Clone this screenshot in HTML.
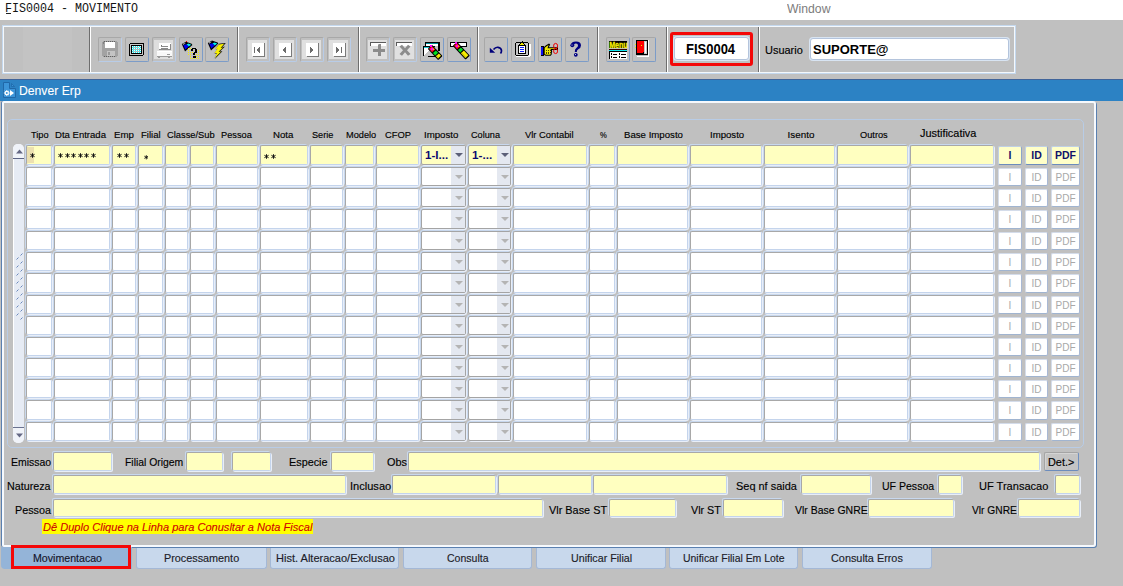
<!DOCTYPE html><html><head><meta charset="utf-8"><style>
*{margin:0;padding:0;box-sizing:border-box}
html,body{width:1123px;height:586px;overflow:hidden;background:#c0c0c0;font-family:"Liberation Sans",sans-serif}
.a{position:absolute}
.t{position:absolute;white-space:nowrap;font-family:"Liberation Sans",sans-serif;color:#000;line-height:1}
.cell{position:absolute;border-style:solid;border-width:1px;border-color:#a8a8a8 #c4d4ec #c4d4ec #a8a8a8;box-shadow:-1px -1px 0 0 #c8d8ee,1px 1px 0 0 #e8eef8;border-radius:2px;background:#fff}
.y{background:#ffffc0}
.fld{position:absolute;border-style:solid;border-width:1px;border-color:#a8a8a8 #c4d4ec #c4d4ec #a8a8a8;box-shadow:-1px -1px 0 0 #c8d8ee,1px 1px 0 0 #e8eef8;border-radius:2px;background:#ffffc0}
.btn{position:absolute;width:24px;height:25px;border:1px solid #a8a8a8;border-radius:2px}
.btn svg{left:-1px!important;top:-1px!important}
.sep{position:absolute;top:27px;height:45px;width:2px;border-left:1px solid #6e6e6e;border-right:1px solid #fff}
.tab{position:absolute;top:548px;height:21px;background:#c8d8ec;border-radius:0 0 3px 3px;border:1px solid #a4b8d6;border-top:none;font-size:10.9px;color:#1c1c2c;text-align:center;line-height:22px}
</style></head><body>
<div class="a" style="left:0;top:0;width:1123px;height:20px;background:#fff"></div>
<div class="t" style="left:4.62px;top:4px;font-family:'Liberation Mono';font-size:11.89px;font-weight:normal;font-style:normal;color:#141414;transform:scaleX(0.9828);transform-origin:0 0;">FIS0004 - MOVIMENTO</div>
<div class="a" style="left:6px;top:13px;width:5px;height:1px;background:#202020"></div>
<div class="t" style="left:787.20px;top:3px;font-family:'Liberation Sans';font-size:12.9px;font-weight:normal;font-style:normal;color:#7c7c7c;transform:scaleX(0.9478);transform-origin:0 0;">Window</div>
<div class="a" style="left:2px;top:25px;width:1014px;height:49px;border:1px solid #c4d8ee;box-shadow:inset 0 0 0 1px #f4f8fc"></div>
<div class="sep" style="left:89px"></div>
<div class="sep" style="left:237px"></div>
<div class="sep" style="left:358px"></div>
<div class="sep" style="left:477px"></div>
<div class="sep" style="left:597px"></div>
<div class="sep" style="left:666px"></div>
<div class="sep" style="left:758px"></div>
<div class="btn" style="left:98px;top:37px;border-right-color:#b8cce8;border-bottom-color:#b8cce8"><svg width="24" height="25" viewBox="0 0 24 25" style="position:absolute;left:0;top:0" shape-rendering="crispEdges">
<rect x="4" y="4" width="16" height="16" fill="#a2a2a2"/>
<rect x="4" y="4" width="1" height="1" fill="#c0c0c0"/><rect x="19" y="4" width="1" height="1" fill="#c0c0c0"/>
<rect x="4" y="19" width="1" height="1" fill="#c0c0c0"/><rect x="19" y="19" width="1" height="1" fill="#c0c0c0"/>
<rect x="7" y="5" width="10" height="6" fill="#ffffff"/>
<path d="M6 4.5h12" stroke="#606060" stroke-dasharray="1 1" stroke-width="1"/>
<rect x="9" y="14" width="8" height="5" fill="#c4c4c4"/>
<rect x="10" y="15" width="2" height="3" fill="#9a9a9a"/>
<path d="M6 19.5h12" stroke="#606060" stroke-dasharray="1 1" stroke-width="1"/>
<rect x="5" y="5" width="1" height="2" fill="#808080"/>
</svg></div>
<div class="btn" style="left:125px;top:37px;border-right-color:#7c9cc8;border-bottom-color:#7c9cc8"><svg width="24" height="25" viewBox="0 0 24 25" style="position:absolute;left:0;top:0" shape-rendering="crispEdges">
<rect x="4" y="6" width="15" height="13" rx="2" fill="#000"/>
<rect x="5" y="7" width="13" height="11" fill="#c8c8c8"/>
<rect x="6" y="8" width="11" height="9" fill="#000"/>
<rect x="7" y="9" width="9" height="7" fill="#18e8f0"/>
<path d="M7 9h1v1h-1zM9 9h1v1h-1zM11 9h1v1h-1zM13 9h1v1h-1zM15 9h1v1h-1zM8 10h1v1h-1zM10 10h1v1h-1zM12 10h1v1h-1zM14 10h1v1h-1zM7 11h1v1h-1zM9 11h1v1h-1zM11 11h1v1h-1zM13 11h1v1h-1zM15 11h1v1h-1zM8 12h1v1h-1zM10 12h1v1h-1zM12 12h1v1h-1zM14 12h1v1h-1zM7 13h1v1h-1zM9 13h1v1h-1zM11 13h1v1h-1zM13 13h1v1h-1zM15 13h1v1h-1zM8 14h1v1h-1zM10 14h1v1h-1zM12 14h1v1h-1zM14 14h1v1h-1zM7 15h1v1h-1zM9 15h1v1h-1zM11 15h1v1h-1zM13 15h1v1h-1zM15 15h1v1h-1z" fill="#e8ffff"/>
<rect x="8" y="10" width="6" height="1" fill="#b0c0c0"/><rect x="8" y="12" width="7" height="1" fill="#b0c0c0"/><rect x="8" y="14" width="7" height="1" fill="#b0c0c0"/>
</svg></div>
<div class="btn" style="left:152px;top:37px;border-right-color:#b8cce8;border-bottom-color:#b8cce8"><svg width="24" height="25" viewBox="0 0 24 25" style="position:absolute;left:0;top:0" shape-rendering="crispEdges">
<rect x="2" y="3" width="19" height="19" fill="#dedede"/>
<rect x="7" y="6" width="12" height="7" fill="#ffffff"/>
<rect x="18" y="7" width="1" height="6" fill="#8a8a8a"/><rect x="7" y="12" width="12" height="1" fill="#8a8a8a"/>
<rect x="9" y="8" width="1" height="1" fill="#777"/><rect x="9" y="9" width="7" height="1" fill="#8a8a8a"/><rect x="9" y="11" width="7" height="1" fill="#8a8a8a"/>
<rect x="5" y="14" width="15" height="5" fill="#f8f8f8"/>
<rect x="5" y="14" width="15" height="1" fill="#ffffff"/>
<rect x="15" y="17" width="3" height="1" fill="#9a9a9a"/>
<rect x="5" y="19" width="15" height="1" fill="#9a9a9a"/>
<rect x="6" y="20" width="2" height="1" fill="#9a9a9a"/><rect x="16" y="20" width="2" height="1" fill="#9a9a9a"/>
</svg></div>
<div class="btn" style="left:179px;top:37px;border-right-color:#7c9cc8;border-bottom-color:#7c9cc8"><svg width="24" height="25" viewBox="0 0 24 25" style="position:absolute;left:0;top:0" shape-rendering="crispEdges"><g transform="translate(0,0.5)" shape-rendering="auto">
<path d="M2.8 6.6 L6 14 L13.4 7.4 L12.6 6.2 L7 4.2 Z" fill="#000"/>
<path d="M4.4 7.6 L6.3 12 L9.8 9 L7.6 6.8 Z" fill="#0000f0"/>
<path d="M7.6 6.8 L9.8 9 L12.2 7.2 L9.5 6 Z" fill="#00f0f0"/>
<path d="M3.6 6.2 L7 5.2 L4.2 7.4 Z" fill="#c0c0c0"/>
</g>
<rect x="6.8" y="4" width="1.4" height="1.2" fill="#f00000"/>
<path d="M9 11h1v1h-1zM11 11h1v1h-1zM9 13h1v1h-1zM19 13h1v1h-1zM9 15h1v1h-1zM11 15h1v1h-1zM13 15h1v1h-1zM17 15h1v1h-1zM19 15h1v1h-1zM9 17h1v1h-1zM11 17h1v1h-1zM17 17h1v1h-1zM19 17h1v1h-1zM11 19h1v1h-1zM17 19h1v1h-1zM19 19h1v1h-1zM11 21h1v1h-1zM13 21h1v1h-1zM15 21h1v1h-1zM17 21h1v1h-1zM19 21h1v1h-1z" fill="#f8f000"/>
<rect x="13" y="11" width="4" height="1.2" fill="#000"/>
<rect x="12" y="12" width="2" height="2" fill="#000"/>
<rect x="16" y="12" width="2" height="3.5" fill="#000"/>
<rect x="15" y="15" width="2" height="1" fill="#000"/>
<rect x="14" y="15.5" width="2" height="2.5" fill="#000"/>
<rect x="14" y="19" width="3" height="2" fill="#000"/>
</svg></div>
<div class="btn" style="left:205px;top:37px;border-right-color:#7c9cc8;border-bottom-color:#7c9cc8"><svg width="24" height="25" viewBox="0 0 24 25" style="position:absolute;left:0;top:0" shape-rendering="crispEdges"><g transform="translate(0,-0.6)" shape-rendering="auto">
<path d="M2.8 6.6 L6 14 L13.4 7.4 L12.6 6.2 L7 4.2 Z" fill="#000"/>
<path d="M4.4 7.6 L6.3 12 L9.8 9 L7.6 6.8 Z" fill="#0000f0"/>
<path d="M7.6 6.8 L9.8 9 L12.2 7.2 L9.5 6 Z" fill="#00f0f0"/>
<path d="M3.6 6.2 L7 5.2 L4.2 7.4 Z" fill="#c0c0c0"/>
</g>
<g shape-rendering="auto">
<path d="M12.6 7 L19 6.3 L15.5 10.4 L18.6 9.7 L13.4 14.5 L16 14.2 L8.6 21.9 L11.4 16.4 L8.6 16.8 L11.9 12 L9.4 12.4 Z" fill="#9a9aa8"/>
<path d="M14.2 6.8 L20.8 6 L17 10.3 L20 9.6 L14.8 14.4 L17.4 14.2 L9.8 22 L12.8 16.3 L10 16.7 L13.4 11.9 L10.8 12.3 Z" fill="#000"/>
<path d="M13.8 7.4 L19.2 6.8 L15.6 10.9 L18.4 10.3 L13.6 14.8 L16 14.7 L9.8 21 L12 16 L9.4 16.3 L12.6 11.8 L10.2 12.2 Z" fill="#f8f000"/>
</g>
</svg></div>
<div class="btn" style="left:246px;top:37px;border-right-color:#b8cce8;border-bottom-color:#b8cce8"><svg width="24" height="25" viewBox="0 0 24 25" style="position:absolute;left:0;top:0" shape-rendering="crispEdges">
<rect x="2" y="3" width="19" height="19" fill="#e0e0e0"/>
<rect x="6" y="6" width="12" height="13" fill="#ffffff"/>
<rect x="18" y="6" width="1" height="14" fill="#7a7a7a"/><rect x="7" y="19" width="12" height="1" fill="#7a7a7a"/>
<rect x="8" y="10" width="1" height="6" fill="#6c6c6c"/><path d="M10 13 L14 10 L14 16 Z" fill="#6c6c6c"/></svg></div>
<div class="btn" style="left:273px;top:37px;border-right-color:#b8cce8;border-bottom-color:#b8cce8"><svg width="24" height="25" viewBox="0 0 24 25" style="position:absolute;left:0;top:0" shape-rendering="crispEdges">
<rect x="2" y="3" width="19" height="19" fill="#e0e0e0"/>
<rect x="6" y="6" width="12" height="13" fill="#ffffff"/>
<rect x="18" y="6" width="1" height="14" fill="#7a7a7a"/><rect x="7" y="19" width="12" height="1" fill="#7a7a7a"/>
<path d="M9 13 L13 10 L13 16 Z" fill="#6c6c6c"/></svg></div>
<div class="btn" style="left:300px;top:37px;border-right-color:#b8cce8;border-bottom-color:#b8cce8"><svg width="24" height="25" viewBox="0 0 24 25" style="position:absolute;left:0;top:0" shape-rendering="crispEdges">
<rect x="2" y="3" width="19" height="19" fill="#e0e0e0"/>
<rect x="6" y="6" width="12" height="13" fill="#ffffff"/>
<rect x="18" y="6" width="1" height="14" fill="#7a7a7a"/><rect x="7" y="19" width="12" height="1" fill="#7a7a7a"/>
<path d="M14 13 L10 10 L10 16 Z" fill="#6c6c6c"/></svg></div>
<div class="btn" style="left:327px;top:37px;border-right-color:#b8cce8;border-bottom-color:#b8cce8"><svg width="24" height="25" viewBox="0 0 24 25" style="position:absolute;left:0;top:0" shape-rendering="crispEdges">
<rect x="2" y="3" width="19" height="19" fill="#e0e0e0"/>
<rect x="6" y="6" width="12" height="13" fill="#ffffff"/>
<rect x="18" y="6" width="1" height="14" fill="#7a7a7a"/><rect x="7" y="19" width="12" height="1" fill="#7a7a7a"/>
<path d="M13 13 L9 10 L9 16 Z" fill="#6c6c6c"/><rect x="14" y="10" width="1" height="6" fill="#6c6c6c"/></svg></div>
<div class="btn" style="left:366px;top:37px;border-right-color:#b8cce8;border-bottom-color:#b8cce8"><svg width="24" height="25" viewBox="0 0 24 25" style="position:absolute;left:0;top:0" shape-rendering="crispEdges">
<rect x="2" y="3" width="19" height="19" fill="#e0e0e0"/>
<rect x="4" y="5" width="16" height="1" fill="#5a5a5a"/>
<rect x="4" y="5" width="1" height="4" fill="#5a5a5a"/>
<rect x="5" y="6" width="15" height="3" fill="#ffffff"/>
<rect x="11.5" y="7" width="3" height="12" fill="#8c8c8c"/>
<rect x="7" y="11.5" width="12" height="3.2" fill="#8c8c8c"/>
<rect x="11.5" y="7" width="1" height="1" fill="#b8b8b8"/>
</svg></div>
<div class="btn" style="left:393px;top:37px;border-right-color:#b8cce8;border-bottom-color:#b8cce8"><svg width="24" height="25" viewBox="0 0 24 25" style="position:absolute;left:0;top:0" shape-rendering="crispEdges">
<rect x="2" y="3" width="19" height="19" fill="#e0e0e0"/>
<rect x="3" y="5" width="16" height="1" fill="#5a5a5a"/>
<rect x="3" y="5" width="1" height="4" fill="#5a5a5a"/>
<rect x="4" y="6" width="15" height="3" fill="#ffffff"/>
<path d="M6.5 9.5 L9 7.8 L12 11.3 L15 7.8 L17.5 9.5 L14 13.2 L17.5 17 L15 18.8 L12 15.2 L9 18.8 L6.5 17 L10 13.2 Z" fill="#8c8c8c" shape-rendering="auto"/>
</svg></div>
<div class="btn" style="left:420px;top:37px;border-right-color:#7c9cc8;border-bottom-color:#7c9cc8"><svg width="24" height="25" viewBox="0 0 24 25" style="position:absolute;left:0;top:0" shape-rendering="crispEdges">
<rect x="5" y="5" width="15" height="1" fill="#000"/><rect x="5" y="5" width="1" height="6" fill="#000"/><rect x="18" y="5" width="2" height="9" fill="#000"/>
<rect x="6" y="6" width="12" height="1" fill="#008c96"/>
<rect x="6" y="7" width="12" height="2" fill="#ffffff"/>
<rect x="3" y="9" width="12" height="1" fill="#000"/><rect x="3" y="9" width="1" height="10" fill="#000"/>
<rect x="4" y="10" width="10" height="1" fill="#18c8d0"/>
<rect x="4" y="11" width="12" height="8" fill="#ffffff"/>
<path d="M4 19 L9 13 L14 19 Z" fill="#c4c4c4"/>
<rect x="8" y="19" width="8" height="1.2" fill="#000"/>
<g transform="translate(10.5,10.5) rotate(47)" shape-rendering="auto">
<rect x="-1" y="-3" width="15.5" height="6" rx="1" fill="#000"/>
<rect x="0" y="-2" width="4.5" height="4" fill="#ff1010"/>
<rect x="1" y="-1.2" width="2.2" height="2.4" fill="#ff00ff"/>
<rect x="2.8" y="-1.8" width="1.2" height="1.2" fill="#f8f000"/>
<rect x="5.8" y="-2" width="3.2" height="4" fill="#00e020"/>
<rect x="10.2" y="-2" width="3.0" height="4" fill="#f8f000"/>
<rect x="10.2" y="0.8" width="3.0" height="1.2" fill="#c8c000"/>
</g>
<rect x="10.0" y="8.3" width="2" height="1.2" fill="#ff00ff"/></svg></div>
<div class="btn" style="left:447px;top:37px;border-right-color:#7c9cc8;border-bottom-color:#7c9cc8"><svg width="24" height="25" viewBox="0 0 24 25" style="position:absolute;left:0;top:0" shape-rendering="crispEdges">
<rect x="3" y="5" width="17" height="5" fill="#000"/>
<rect x="4" y="6" width="15" height="3" fill="#ffffff"/>
<g transform="translate(8.5,7.5) rotate(47)" shape-rendering="auto">
<rect x="-1" y="-3" width="19" height="6" rx="1" fill="#000"/>
<rect x="0" y="-2" width="4.5" height="4" fill="#ff1010"/>
<rect x="1" y="-1.2" width="2.2" height="2.4" fill="#ff00ff"/>
<rect x="2.8" y="-1.8" width="1.2" height="1.2" fill="#f8f000"/>
<rect x="5.8" y="-2" width="3.2" height="4" fill="#00e020"/>
<rect x="10.2" y="-2" width="6.5" height="4" fill="#f8f000"/>
<rect x="10.2" y="0.8" width="6.5" height="1.2" fill="#c8c000"/>
</g>
<rect x="8.0" y="5.3" width="2" height="1.2" fill="#ff00ff"/></svg></div>
<div class="btn" style="left:484px;top:37px;border-right-color:#7c9cc8;border-bottom-color:#7c9cc8"><svg width="24" height="25" viewBox="0 0 24 25" style="position:absolute;left:0;top:0" shape-rendering="crispEdges">
<path d="M9.5 12.5 Q11.5 10 14 10.3 Q17.5 10.8 17.5 13.8 Q17.5 15.3 16.5 16.5" stroke="#00007a" stroke-width="1.7" fill="none" shape-rendering="auto"/>
<path d="M5.8 10.8 L11.2 15.8 L5.8 15.8 Z" fill="#00007a" shape-rendering="auto"/>
</svg></div>
<div class="btn" style="left:511px;top:37px;border-right-color:#7c9cc8;border-bottom-color:#7c9cc8"><svg width="24" height="25" viewBox="0 0 24 25" style="position:absolute;left:0;top:0" shape-rendering="crispEdges">
<rect x="4" y="5" width="14" height="14" rx="2.5" fill="#000"/>
<rect x="5" y="18.5" width="14" height="1.5" fill="#ffffff"/><rect x="18" y="7" width="1.5" height="12" fill="#ffffff"/>
<rect x="5.2" y="6.2" width="11.6" height="11.6" rx="1" fill="#c8c8c8"/>
<rect x="7" y="8" width="8" height="9" fill="#000"/>
<rect x="8" y="9" width="6" height="7" fill="#ffffff"/>
<rect x="9" y="10.3" width="4" height="1" fill="#1020ff"/><rect x="9" y="12.3" width="4" height="1" fill="#1020ff"/><rect x="9" y="14.3" width="4" height="1" fill="#1020ff"/>
<path d="M8 8 L9.5 5.5 L12.5 5.5 L14 8 Z" fill="#000"/>
<path d="M8.8 7.8 L10 6.2 L12 6.2 L13.2 7.8 Z" fill="#f0e800"/>
<rect x="10.5" y="4.3" width="1" height="1.5" fill="#000"/>
</svg></div>
<div class="btn" style="left:538px;top:37px;border-right-color:#7c9cc8;border-bottom-color:#7c9cc8"><svg width="24" height="25" viewBox="0 0 24 25" style="position:absolute;left:0;top:0" shape-rendering="crispEdges">
<rect x="2.5" y="9" width="3.5" height="9.5" fill="#000"/>
<rect x="3.3" y="9.8" width="2" height="7.9" fill="#1010f0"/>
<path d="M5.8 10.2 L8 8.3 L11 6.5 L12.2 7.5 L10.8 10.3 L20 10.3 L20 12.9 L13.8 12.9 L14.2 14.3 L13.8 15.8 L13.8 17.3 L12.8 18.8 L7.5 18.8 L5.8 17.5 Z" fill="#000" shape-rendering="auto"/>
<path d="M6.7 10.8 L8.6 9.2 L10.6 8 L9.5 11.3 L19 11.3 L19 11.9 L12.6 11.9 L13 14.2 L12.7 15.6 L12.7 17 L12.2 17.8 L7.9 17.8 L6.7 16.9 Z" fill="#f0e800" shape-rendering="auto"/>
<path d="M8 13.6h4.5M8 15.2h4.5M8 16.8h4" stroke="#000" stroke-width="0.7" stroke-dasharray="1 0.8"/>
<ellipse cx="17.6" cy="8.9" rx="2" ry="2.5" stroke="#f00000" stroke-width="1" fill="none" shape-rendering="auto"/>
<ellipse cx="17.6" cy="14.1" rx="2" ry="2.5" stroke="#f00000" stroke-width="1" fill="none" shape-rendering="auto"/>
</svg></div>
<div class="btn" style="left:565px;top:37px;border-right-color:#7c9cc8;border-bottom-color:#7c9cc8"><svg width="24" height="25" viewBox="0 0 24 25" style="position:absolute;left:0;top:0" shape-rendering="crispEdges">
<path d="M5.5 8.8 Q6 4.5 11 4.5 Q16 4.5 16 8.5 Q16 11 13.3 12.2 Q11.8 13 11.8 15 L9.8 15 Q9.5 12 11.6 10.8 Q13 10 13 8.6 Q13 6.4 11 6.4 Q9.6 6.4 9.2 7.4 Z" fill="#000080" shape-rendering="auto"/>
<circle cx="7.3" cy="8.3" r="1.9" fill="#000080" shape-rendering="auto"/>
<circle cx="7" cy="8" r="0.5" fill="#fff" shape-rendering="auto"/>
<circle cx="10.8" cy="17.8" r="1.9" fill="#000080" shape-rendering="auto"/>
<circle cx="10.5" cy="17.5" r="0.5" fill="#fff" shape-rendering="auto"/>
</svg></div>
<div class="btn" style="left:606px;top:37px;border-right-color:#7c9cc8;border-bottom-color:#7c9cc8"><svg width="24" height="25" viewBox="0 0 24 25" style="position:absolute;left:0;top:0" shape-rendering="crispEdges">
<rect x="3" y="4" width="18" height="7" fill="#000"/>
<text x="3.2" y="11" font-family="Liberation Sans" font-weight="bold" font-size="9" fill="#f8f000" textLength="18.5" lengthAdjust="spacingAndGlyphs" stroke="#f8f000" stroke-width="0.3">Menu</text>
<rect x="3" y="12" width="18" height="1" fill="#300000"/>
<rect x="3" y="13" width="18" height="1" fill="#10e8f0"/>
<rect x="3" y="14" width="18" height="1" fill="#000"/>
<rect x="3" y="14" width="1" height="8" fill="#000"/>
<rect x="4" y="15" width="17" height="7" fill="#ffffff"/>
<rect x="5" y="16" width="1" height="2" fill="#000"/><rect x="7" y="17" width="4" height="1" fill="#000"/><rect x="13" y="16" width="1" height="2" fill="#000"/><rect x="15" y="17" width="5" height="1" fill="#000"/>
<rect x="5" y="19" width="1" height="2" fill="#000"/><rect x="7" y="20" width="4" height="1" fill="#000"/><rect x="13" y="19" width="1" height="2" fill="#000"/><rect x="15" y="20" width="5" height="1" fill="#000"/>
</svg></div>
<div class="btn" style="left:632px;top:37px;border-right-color:#7c9cc8;border-bottom-color:#7c9cc8"><svg width="24" height="25" viewBox="0 0 24 25" style="position:absolute;left:0;top:0" shape-rendering="crispEdges">
<rect x="4" y="3" width="12" height="15" fill="#000"/>
<rect x="16" y="3" width="1" height="16" fill="#ffffff"/>
<rect x="5" y="4" width="6" height="12" fill="#ff0000"/>
<rect x="11" y="4" width="1" height="11" fill="#ff0000"/>
<rect x="12" y="4" width="3" height="13" fill="#c8c8c8"/>
<rect x="13" y="5" width="1" height="11" fill="#ffffff"/>
<rect x="9" y="8" width="1" height="1" fill="#f0e800"/>
<rect x="3" y="7" width="1" height="1" fill="#f0e800"/><rect x="3" y="10" width="1" height="1" fill="#f0e800"/>
<rect x="5" y="19" width="12" height="1" fill="#ffffff"/>
</svg></div>
<div class="a" style="left:670px;top:32px;width:83px;height:34px;border:3px solid #f40808;border-radius:3px"></div>
<div class="a" style="left:674px;top:37px;width:75px;height:23px;background:#fff;border:1px solid #b4c4dc;border-radius:3px;box-shadow:0 0 0 1px #d8e4f2"></div>
<div class="t" style="left:685.60px;top:42px;font-family:'Liberation Sans';font-size:14.49px;font-weight:bold;font-style:normal;color:#000;transform:scaleX(0.8963);transform-origin:0 0;">FIS0004</div>
<div class="t" style="left:765.39px;top:45px;font-family:'Liberation Sans';font-size:10.87px;font-weight:normal;font-style:normal;color:#000;transform:scaleX(1.0083);transform-origin:0 0;-webkit-text-stroke:0.15px currentColor;">Usuario</div>
<div class="a" style="left:810px;top:38px;width:199px;height:22px;background:#fff;border:1px solid #b4c4dc;border-radius:3px;box-shadow:0 0 0 1px #d8e4f2"></div>
<div class="t" style="left:812.55px;top:43px;font-family:'Liberation Sans';font-size:13.62px;font-weight:bold;font-style:normal;color:#000;transform:scaleX(0.9545);transform-origin:0 0;">SUPORTE@</div>
<div class="a" style="left:0;top:79px;width:1123px;height:22px;background:#2c82c4;border-top:1px solid #40649a"></div>
<div class="a" style="left:23px;top:27px;width:49px;height:44px;background:#c3c3c3"></div>
<div class="t" style="left:18.78px;top:84px;font-family:'Liberation Sans';font-size:13.19px;font-weight:normal;font-style:normal;color:#fff;transform:scaleX(0.9246);transform-origin:0 0;-webkit-text-stroke:0.1px currentColor;">Denver Erp</div>
<svg class="a" style="left:3px;top:82px" width="13" height="16" viewBox="0 0 13 16"><path d="M0.5 0.5h6v6h6v9h-12z" fill="#3c94d8" stroke="#2068a8" stroke-width="1"/><path d="M8.5 1.5l3 3h-3z" fill="#3c94d8" stroke="#2068a8" stroke-width="0.8"/><path d="M7 8l4 3-4 3z" fill="#fff"/><circle cx="3.8" cy="11" r="1.6" fill="none" stroke="#fff" stroke-width="1.2"/><path d="M3.8 8v1.2M3.8 12.8v1.2M0.8 11h1.2M5.6 11h1.2M1.6 8.8l.8.8M5.2 12.4l.8.8M1.6 13.2l.8-.8M5.2 9.6l.8-.8" stroke="#fff" stroke-width="0.9"/></svg>
<div class="a" style="left:2px;top:101px;width:1094px;height:446px;border:2px solid #f6f9fd;border-radius:2px 3px 3px 2px;box-shadow:-1px 0 0 0 #5a80b0,1px 1px 0 0 #5a80b0"></div>
<div class="a" style="left:7px;top:119px;width:1077px;height:329px;border:1px solid #b8cce6;border-radius:5px"></div>
<div class="t" style="left:31.10px;top:130px;font-family:'Liberation Sans';font-size:9.86px;font-weight:normal;font-style:normal;color:#000;transform:scaleX(0.9389);transform-origin:0 0;-webkit-text-stroke:0.15px currentColor;">Tipo</div>
<div class="t" style="left:55.23px;top:130px;font-family:'Liberation Sans';font-size:9.86px;font-weight:normal;font-style:normal;color:#000;transform:scaleX(0.9706);transform-origin:0 0;-webkit-text-stroke:0.15px currentColor;">Dta Entrada</div>
<div class="t" style="left:114.02px;top:130px;font-family:'Liberation Sans';font-size:9.86px;font-weight:normal;font-style:normal;color:#000;transform:scaleX(0.9842);transform-origin:0 0;-webkit-text-stroke:0.15px currentColor;">Emp</div>
<div class="t" style="left:140.53px;top:130px;font-family:'Liberation Sans';font-size:9.86px;font-weight:normal;font-style:normal;color:#000;transform:scaleX(0.9684);transform-origin:0 0;-webkit-text-stroke:0.15px currentColor;">Filial</div>
<div class="t" style="left:167.40px;top:130px;font-family:'Liberation Sans';font-size:9.86px;font-weight:normal;font-style:normal;color:#000;transform:scaleX(0.9480);transform-origin:0 0;-webkit-text-stroke:0.15px currentColor;">Classe/Sub</div>
<div class="t" style="left:220.66px;top:130px;font-family:'Liberation Sans';font-size:9.86px;font-weight:normal;font-style:normal;color:#000;transform:scaleX(0.9375);transform-origin:0 0;-webkit-text-stroke:0.15px currentColor;">Pessoa</div>
<div class="t" style="left:273.32px;top:130px;font-family:'Liberation Sans';font-size:9.86px;font-weight:normal;font-style:normal;color:#000;transform:scaleX(0.9800);transform-origin:0 0;-webkit-text-stroke:0.15px currentColor;">Nota</div>
<div class="t" style="left:312.37px;top:130px;font-family:'Liberation Sans';font-size:9.86px;font-weight:normal;font-style:normal;color:#000;transform:scaleX(0.9318);transform-origin:0 0;-webkit-text-stroke:0.15px currentColor;">Serie</div>
<div class="t" style="left:346.06px;top:130px;font-family:'Liberation Sans';font-size:9.86px;font-weight:normal;font-style:normal;color:#000;transform:scaleX(0.9355);transform-origin:0 0;-webkit-text-stroke:0.15px currentColor;">Modelo</div>
<div class="t" style="left:385.00px;top:130px;font-family:'Liberation Sans';font-size:9.86px;font-weight:normal;font-style:normal;color:#000;transform:scaleX(0.9519);transform-origin:0 0;-webkit-text-stroke:0.15px currentColor;">CFOP</div>
<div class="t" style="left:424.42px;top:130px;font-family:'Liberation Sans';font-size:9.86px;font-weight:normal;font-style:normal;color:#000;transform:scaleX(0.9824);transform-origin:0 0;-webkit-text-stroke:0.15px currentColor;">Imposto</div>
<div class="t" style="left:470.80px;top:130px;font-family:'Liberation Sans';font-size:9.86px;font-weight:normal;font-style:normal;color:#000;transform:scaleX(0.9290);transform-origin:0 0;-webkit-text-stroke:0.15px currentColor;">Coluna</div>
<div class="t" style="left:525.00px;top:130px;font-family:'Liberation Sans';font-size:9.86px;font-weight:normal;font-style:normal;color:#000;transform:scaleX(0.9540);transform-origin:0 0;-webkit-text-stroke:0.15px currentColor;">Vlr Contabil</div>
<div class="t" style="left:599.60px;top:130px;font-family:'Liberation Sans';font-size:9.86px;font-weight:normal;font-style:normal;color:#000;transform:scaleX(0.7778);transform-origin:0 0;-webkit-text-stroke:0.15px currentColor;">%</div>
<div class="t" style="left:624.22px;top:130px;font-family:'Liberation Sans';font-size:9.86px;font-weight:normal;font-style:normal;color:#000;transform:scaleX(0.9797);transform-origin:0 0;-webkit-text-stroke:0.15px currentColor;">Base Imposto</div>
<div class="t" style="left:709.62px;top:130px;font-family:'Liberation Sans';font-size:9.86px;font-weight:normal;font-style:normal;color:#000;transform:scaleX(0.9765);transform-origin:0 0;-webkit-text-stroke:0.15px currentColor;">Imposto</div>
<div class="t" style="left:787.60px;top:130px;font-family:'Liberation Sans';font-size:9.86px;font-weight:normal;font-style:normal;color:#000;transform:scaleX(1.0000);transform-origin:0 0;-webkit-text-stroke:0.15px currentColor;">Isento</div>
<div class="t" style="left:860.30px;top:130px;font-family:'Liberation Sans';font-size:9.86px;font-weight:normal;font-style:normal;color:#000;transform:scaleX(0.9379);transform-origin:0 0;-webkit-text-stroke:0.15px currentColor;">Outros</div>
<div class="t" style="left:920.00px;top:128px;font-family:'Liberation Sans';font-size:11.01px;font-weight:normal;font-style:normal;color:#000;transform:scaleX(0.9912);transform-origin:0 0;-webkit-text-stroke:0.15px currentColor;">Justificativa</div>
<div class="cell y" style="left:26px;top:145.00px;width:26px;height:20.00px"></div>
<div class="cell y" style="left:54px;top:145.00px;width:56px;height:20.00px"></div>
<div class="cell y" style="left:112px;top:145.00px;width:24px;height:20.00px"></div>
<div class="cell y" style="left:138px;top:145.00px;width:25px;height:20.00px"></div>
<div class="cell y" style="left:165px;top:145.00px;width:23px;height:20.00px"></div>
<div class="cell y" style="left:190px;top:145.00px;width:24px;height:20.00px"></div>
<div class="cell y" style="left:216px;top:145.00px;width:42px;height:20.00px"></div>
<div class="cell y" style="left:260px;top:145.00px;width:48px;height:20.00px"></div>
<div class="cell y" style="left:310px;top:145.00px;width:33px;height:20.00px"></div>
<div class="cell y" style="left:345px;top:145.00px;width:29px;height:20.00px"></div>
<div class="cell y" style="left:376px;top:145.00px;width:43px;height:20.00px"></div>
<div class="cell y" style="left:421px;top:145.00px;width:45px;height:20.00px;border-color:#a4a4a4"></div>
<div class="cell y" style="left:468px;top:145.00px;width:43px;height:20.00px;border-color:#a4a4a4"></div>
<div class="cell y" style="left:513px;top:145.00px;width:74px;height:20.00px"></div>
<div class="cell y" style="left:589px;top:145.00px;width:26px;height:20.00px"></div>
<div class="cell y" style="left:617px;top:145.00px;width:71px;height:20.00px"></div>
<div class="cell y" style="left:690px;top:145.00px;width:72px;height:20.00px"></div>
<div class="cell y" style="left:764px;top:145.00px;width:71px;height:20.00px"></div>
<div class="cell y" style="left:837px;top:145.00px;width:71px;height:20.00px"></div>
<div class="cell y" style="left:910px;top:145.00px;width:84px;height:20.00px"></div>
<div class="cell" style="left:26px;top:167.00px;width:26px;height:19.00px"></div>
<div class="cell" style="left:54px;top:167.00px;width:56px;height:19.00px"></div>
<div class="cell" style="left:112px;top:167.00px;width:24px;height:19.00px"></div>
<div class="cell" style="left:138px;top:167.00px;width:25px;height:19.00px"></div>
<div class="cell" style="left:165px;top:167.00px;width:23px;height:19.00px"></div>
<div class="cell" style="left:190px;top:167.00px;width:24px;height:19.00px"></div>
<div class="cell" style="left:216px;top:167.00px;width:42px;height:19.00px"></div>
<div class="cell" style="left:260px;top:167.00px;width:48px;height:19.00px"></div>
<div class="cell" style="left:310px;top:167.00px;width:33px;height:19.00px"></div>
<div class="cell" style="left:345px;top:167.00px;width:29px;height:19.00px"></div>
<div class="cell" style="left:376px;top:167.00px;width:43px;height:19.00px"></div>
<div class="cell" style="left:421px;top:167.00px;width:45px;height:19.00px;border-color:#a4a4a4"></div>
<div class="cell" style="left:468px;top:167.00px;width:43px;height:19.00px;border-color:#a4a4a4"></div>
<div class="cell" style="left:513px;top:167.00px;width:74px;height:19.00px"></div>
<div class="cell" style="left:589px;top:167.00px;width:26px;height:19.00px"></div>
<div class="cell" style="left:617px;top:167.00px;width:71px;height:19.00px"></div>
<div class="cell" style="left:690px;top:167.00px;width:72px;height:19.00px"></div>
<div class="cell" style="left:764px;top:167.00px;width:71px;height:19.00px"></div>
<div class="cell" style="left:837px;top:167.00px;width:71px;height:19.00px"></div>
<div class="cell" style="left:910px;top:167.00px;width:84px;height:19.00px"></div>
<div class="cell" style="left:26px;top:188.00px;width:26px;height:19.00px"></div>
<div class="cell" style="left:54px;top:188.00px;width:56px;height:19.00px"></div>
<div class="cell" style="left:112px;top:188.00px;width:24px;height:19.00px"></div>
<div class="cell" style="left:138px;top:188.00px;width:25px;height:19.00px"></div>
<div class="cell" style="left:165px;top:188.00px;width:23px;height:19.00px"></div>
<div class="cell" style="left:190px;top:188.00px;width:24px;height:19.00px"></div>
<div class="cell" style="left:216px;top:188.00px;width:42px;height:19.00px"></div>
<div class="cell" style="left:260px;top:188.00px;width:48px;height:19.00px"></div>
<div class="cell" style="left:310px;top:188.00px;width:33px;height:19.00px"></div>
<div class="cell" style="left:345px;top:188.00px;width:29px;height:19.00px"></div>
<div class="cell" style="left:376px;top:188.00px;width:43px;height:19.00px"></div>
<div class="cell" style="left:421px;top:188.00px;width:45px;height:19.00px;border-color:#a4a4a4"></div>
<div class="cell" style="left:468px;top:188.00px;width:43px;height:19.00px;border-color:#a4a4a4"></div>
<div class="cell" style="left:513px;top:188.00px;width:74px;height:19.00px"></div>
<div class="cell" style="left:589px;top:188.00px;width:26px;height:19.00px"></div>
<div class="cell" style="left:617px;top:188.00px;width:71px;height:19.00px"></div>
<div class="cell" style="left:690px;top:188.00px;width:72px;height:19.00px"></div>
<div class="cell" style="left:764px;top:188.00px;width:71px;height:19.00px"></div>
<div class="cell" style="left:837px;top:188.00px;width:71px;height:19.00px"></div>
<div class="cell" style="left:910px;top:188.00px;width:84px;height:19.00px"></div>
<div class="cell" style="left:26px;top:209.00px;width:26px;height:20.00px"></div>
<div class="cell" style="left:54px;top:209.00px;width:56px;height:20.00px"></div>
<div class="cell" style="left:112px;top:209.00px;width:24px;height:20.00px"></div>
<div class="cell" style="left:138px;top:209.00px;width:25px;height:20.00px"></div>
<div class="cell" style="left:165px;top:209.00px;width:23px;height:20.00px"></div>
<div class="cell" style="left:190px;top:209.00px;width:24px;height:20.00px"></div>
<div class="cell" style="left:216px;top:209.00px;width:42px;height:20.00px"></div>
<div class="cell" style="left:260px;top:209.00px;width:48px;height:20.00px"></div>
<div class="cell" style="left:310px;top:209.00px;width:33px;height:20.00px"></div>
<div class="cell" style="left:345px;top:209.00px;width:29px;height:20.00px"></div>
<div class="cell" style="left:376px;top:209.00px;width:43px;height:20.00px"></div>
<div class="cell" style="left:421px;top:209.00px;width:45px;height:20.00px;border-color:#a4a4a4"></div>
<div class="cell" style="left:468px;top:209.00px;width:43px;height:20.00px;border-color:#a4a4a4"></div>
<div class="cell" style="left:513px;top:209.00px;width:74px;height:20.00px"></div>
<div class="cell" style="left:589px;top:209.00px;width:26px;height:20.00px"></div>
<div class="cell" style="left:617px;top:209.00px;width:71px;height:20.00px"></div>
<div class="cell" style="left:690px;top:209.00px;width:72px;height:20.00px"></div>
<div class="cell" style="left:764px;top:209.00px;width:71px;height:20.00px"></div>
<div class="cell" style="left:837px;top:209.00px;width:71px;height:20.00px"></div>
<div class="cell" style="left:910px;top:209.00px;width:84px;height:20.00px"></div>
<div class="cell" style="left:26px;top:231.00px;width:26px;height:19.00px"></div>
<div class="cell" style="left:54px;top:231.00px;width:56px;height:19.00px"></div>
<div class="cell" style="left:112px;top:231.00px;width:24px;height:19.00px"></div>
<div class="cell" style="left:138px;top:231.00px;width:25px;height:19.00px"></div>
<div class="cell" style="left:165px;top:231.00px;width:23px;height:19.00px"></div>
<div class="cell" style="left:190px;top:231.00px;width:24px;height:19.00px"></div>
<div class="cell" style="left:216px;top:231.00px;width:42px;height:19.00px"></div>
<div class="cell" style="left:260px;top:231.00px;width:48px;height:19.00px"></div>
<div class="cell" style="left:310px;top:231.00px;width:33px;height:19.00px"></div>
<div class="cell" style="left:345px;top:231.00px;width:29px;height:19.00px"></div>
<div class="cell" style="left:376px;top:231.00px;width:43px;height:19.00px"></div>
<div class="cell" style="left:421px;top:231.00px;width:45px;height:19.00px;border-color:#a4a4a4"></div>
<div class="cell" style="left:468px;top:231.00px;width:43px;height:19.00px;border-color:#a4a4a4"></div>
<div class="cell" style="left:513px;top:231.00px;width:74px;height:19.00px"></div>
<div class="cell" style="left:589px;top:231.00px;width:26px;height:19.00px"></div>
<div class="cell" style="left:617px;top:231.00px;width:71px;height:19.00px"></div>
<div class="cell" style="left:690px;top:231.00px;width:72px;height:19.00px"></div>
<div class="cell" style="left:764px;top:231.00px;width:71px;height:19.00px"></div>
<div class="cell" style="left:837px;top:231.00px;width:71px;height:19.00px"></div>
<div class="cell" style="left:910px;top:231.00px;width:84px;height:19.00px"></div>
<div class="cell" style="left:26px;top:252.00px;width:26px;height:19.00px"></div>
<div class="cell" style="left:54px;top:252.00px;width:56px;height:19.00px"></div>
<div class="cell" style="left:112px;top:252.00px;width:24px;height:19.00px"></div>
<div class="cell" style="left:138px;top:252.00px;width:25px;height:19.00px"></div>
<div class="cell" style="left:165px;top:252.00px;width:23px;height:19.00px"></div>
<div class="cell" style="left:190px;top:252.00px;width:24px;height:19.00px"></div>
<div class="cell" style="left:216px;top:252.00px;width:42px;height:19.00px"></div>
<div class="cell" style="left:260px;top:252.00px;width:48px;height:19.00px"></div>
<div class="cell" style="left:310px;top:252.00px;width:33px;height:19.00px"></div>
<div class="cell" style="left:345px;top:252.00px;width:29px;height:19.00px"></div>
<div class="cell" style="left:376px;top:252.00px;width:43px;height:19.00px"></div>
<div class="cell" style="left:421px;top:252.00px;width:45px;height:19.00px;border-color:#a4a4a4"></div>
<div class="cell" style="left:468px;top:252.00px;width:43px;height:19.00px;border-color:#a4a4a4"></div>
<div class="cell" style="left:513px;top:252.00px;width:74px;height:19.00px"></div>
<div class="cell" style="left:589px;top:252.00px;width:26px;height:19.00px"></div>
<div class="cell" style="left:617px;top:252.00px;width:71px;height:19.00px"></div>
<div class="cell" style="left:690px;top:252.00px;width:72px;height:19.00px"></div>
<div class="cell" style="left:764px;top:252.00px;width:71px;height:19.00px"></div>
<div class="cell" style="left:837px;top:252.00px;width:71px;height:19.00px"></div>
<div class="cell" style="left:910px;top:252.00px;width:84px;height:19.00px"></div>
<div class="cell" style="left:26px;top:273.00px;width:26px;height:20.00px"></div>
<div class="cell" style="left:54px;top:273.00px;width:56px;height:20.00px"></div>
<div class="cell" style="left:112px;top:273.00px;width:24px;height:20.00px"></div>
<div class="cell" style="left:138px;top:273.00px;width:25px;height:20.00px"></div>
<div class="cell" style="left:165px;top:273.00px;width:23px;height:20.00px"></div>
<div class="cell" style="left:190px;top:273.00px;width:24px;height:20.00px"></div>
<div class="cell" style="left:216px;top:273.00px;width:42px;height:20.00px"></div>
<div class="cell" style="left:260px;top:273.00px;width:48px;height:20.00px"></div>
<div class="cell" style="left:310px;top:273.00px;width:33px;height:20.00px"></div>
<div class="cell" style="left:345px;top:273.00px;width:29px;height:20.00px"></div>
<div class="cell" style="left:376px;top:273.00px;width:43px;height:20.00px"></div>
<div class="cell" style="left:421px;top:273.00px;width:45px;height:20.00px;border-color:#a4a4a4"></div>
<div class="cell" style="left:468px;top:273.00px;width:43px;height:20.00px;border-color:#a4a4a4"></div>
<div class="cell" style="left:513px;top:273.00px;width:74px;height:20.00px"></div>
<div class="cell" style="left:589px;top:273.00px;width:26px;height:20.00px"></div>
<div class="cell" style="left:617px;top:273.00px;width:71px;height:20.00px"></div>
<div class="cell" style="left:690px;top:273.00px;width:72px;height:20.00px"></div>
<div class="cell" style="left:764px;top:273.00px;width:71px;height:20.00px"></div>
<div class="cell" style="left:837px;top:273.00px;width:71px;height:20.00px"></div>
<div class="cell" style="left:910px;top:273.00px;width:84px;height:20.00px"></div>
<div class="cell" style="left:26px;top:295.00px;width:26px;height:19.00px"></div>
<div class="cell" style="left:54px;top:295.00px;width:56px;height:19.00px"></div>
<div class="cell" style="left:112px;top:295.00px;width:24px;height:19.00px"></div>
<div class="cell" style="left:138px;top:295.00px;width:25px;height:19.00px"></div>
<div class="cell" style="left:165px;top:295.00px;width:23px;height:19.00px"></div>
<div class="cell" style="left:190px;top:295.00px;width:24px;height:19.00px"></div>
<div class="cell" style="left:216px;top:295.00px;width:42px;height:19.00px"></div>
<div class="cell" style="left:260px;top:295.00px;width:48px;height:19.00px"></div>
<div class="cell" style="left:310px;top:295.00px;width:33px;height:19.00px"></div>
<div class="cell" style="left:345px;top:295.00px;width:29px;height:19.00px"></div>
<div class="cell" style="left:376px;top:295.00px;width:43px;height:19.00px"></div>
<div class="cell" style="left:421px;top:295.00px;width:45px;height:19.00px;border-color:#a4a4a4"></div>
<div class="cell" style="left:468px;top:295.00px;width:43px;height:19.00px;border-color:#a4a4a4"></div>
<div class="cell" style="left:513px;top:295.00px;width:74px;height:19.00px"></div>
<div class="cell" style="left:589px;top:295.00px;width:26px;height:19.00px"></div>
<div class="cell" style="left:617px;top:295.00px;width:71px;height:19.00px"></div>
<div class="cell" style="left:690px;top:295.00px;width:72px;height:19.00px"></div>
<div class="cell" style="left:764px;top:295.00px;width:71px;height:19.00px"></div>
<div class="cell" style="left:837px;top:295.00px;width:71px;height:19.00px"></div>
<div class="cell" style="left:910px;top:295.00px;width:84px;height:19.00px"></div>
<div class="cell" style="left:26px;top:316.00px;width:26px;height:19.00px"></div>
<div class="cell" style="left:54px;top:316.00px;width:56px;height:19.00px"></div>
<div class="cell" style="left:112px;top:316.00px;width:24px;height:19.00px"></div>
<div class="cell" style="left:138px;top:316.00px;width:25px;height:19.00px"></div>
<div class="cell" style="left:165px;top:316.00px;width:23px;height:19.00px"></div>
<div class="cell" style="left:190px;top:316.00px;width:24px;height:19.00px"></div>
<div class="cell" style="left:216px;top:316.00px;width:42px;height:19.00px"></div>
<div class="cell" style="left:260px;top:316.00px;width:48px;height:19.00px"></div>
<div class="cell" style="left:310px;top:316.00px;width:33px;height:19.00px"></div>
<div class="cell" style="left:345px;top:316.00px;width:29px;height:19.00px"></div>
<div class="cell" style="left:376px;top:316.00px;width:43px;height:19.00px"></div>
<div class="cell" style="left:421px;top:316.00px;width:45px;height:19.00px;border-color:#a4a4a4"></div>
<div class="cell" style="left:468px;top:316.00px;width:43px;height:19.00px;border-color:#a4a4a4"></div>
<div class="cell" style="left:513px;top:316.00px;width:74px;height:19.00px"></div>
<div class="cell" style="left:589px;top:316.00px;width:26px;height:19.00px"></div>
<div class="cell" style="left:617px;top:316.00px;width:71px;height:19.00px"></div>
<div class="cell" style="left:690px;top:316.00px;width:72px;height:19.00px"></div>
<div class="cell" style="left:764px;top:316.00px;width:71px;height:19.00px"></div>
<div class="cell" style="left:837px;top:316.00px;width:71px;height:19.00px"></div>
<div class="cell" style="left:910px;top:316.00px;width:84px;height:19.00px"></div>
<div class="cell" style="left:26px;top:337.00px;width:26px;height:19.00px"></div>
<div class="cell" style="left:54px;top:337.00px;width:56px;height:19.00px"></div>
<div class="cell" style="left:112px;top:337.00px;width:24px;height:19.00px"></div>
<div class="cell" style="left:138px;top:337.00px;width:25px;height:19.00px"></div>
<div class="cell" style="left:165px;top:337.00px;width:23px;height:19.00px"></div>
<div class="cell" style="left:190px;top:337.00px;width:24px;height:19.00px"></div>
<div class="cell" style="left:216px;top:337.00px;width:42px;height:19.00px"></div>
<div class="cell" style="left:260px;top:337.00px;width:48px;height:19.00px"></div>
<div class="cell" style="left:310px;top:337.00px;width:33px;height:19.00px"></div>
<div class="cell" style="left:345px;top:337.00px;width:29px;height:19.00px"></div>
<div class="cell" style="left:376px;top:337.00px;width:43px;height:19.00px"></div>
<div class="cell" style="left:421px;top:337.00px;width:45px;height:19.00px;border-color:#a4a4a4"></div>
<div class="cell" style="left:468px;top:337.00px;width:43px;height:19.00px;border-color:#a4a4a4"></div>
<div class="cell" style="left:513px;top:337.00px;width:74px;height:19.00px"></div>
<div class="cell" style="left:589px;top:337.00px;width:26px;height:19.00px"></div>
<div class="cell" style="left:617px;top:337.00px;width:71px;height:19.00px"></div>
<div class="cell" style="left:690px;top:337.00px;width:72px;height:19.00px"></div>
<div class="cell" style="left:764px;top:337.00px;width:71px;height:19.00px"></div>
<div class="cell" style="left:837px;top:337.00px;width:71px;height:19.00px"></div>
<div class="cell" style="left:910px;top:337.00px;width:84px;height:19.00px"></div>
<div class="cell" style="left:26px;top:358.00px;width:26px;height:19.00px"></div>
<div class="cell" style="left:54px;top:358.00px;width:56px;height:19.00px"></div>
<div class="cell" style="left:112px;top:358.00px;width:24px;height:19.00px"></div>
<div class="cell" style="left:138px;top:358.00px;width:25px;height:19.00px"></div>
<div class="cell" style="left:165px;top:358.00px;width:23px;height:19.00px"></div>
<div class="cell" style="left:190px;top:358.00px;width:24px;height:19.00px"></div>
<div class="cell" style="left:216px;top:358.00px;width:42px;height:19.00px"></div>
<div class="cell" style="left:260px;top:358.00px;width:48px;height:19.00px"></div>
<div class="cell" style="left:310px;top:358.00px;width:33px;height:19.00px"></div>
<div class="cell" style="left:345px;top:358.00px;width:29px;height:19.00px"></div>
<div class="cell" style="left:376px;top:358.00px;width:43px;height:19.00px"></div>
<div class="cell" style="left:421px;top:358.00px;width:45px;height:19.00px;border-color:#a4a4a4"></div>
<div class="cell" style="left:468px;top:358.00px;width:43px;height:19.00px;border-color:#a4a4a4"></div>
<div class="cell" style="left:513px;top:358.00px;width:74px;height:19.00px"></div>
<div class="cell" style="left:589px;top:358.00px;width:26px;height:19.00px"></div>
<div class="cell" style="left:617px;top:358.00px;width:71px;height:19.00px"></div>
<div class="cell" style="left:690px;top:358.00px;width:72px;height:19.00px"></div>
<div class="cell" style="left:764px;top:358.00px;width:71px;height:19.00px"></div>
<div class="cell" style="left:837px;top:358.00px;width:71px;height:19.00px"></div>
<div class="cell" style="left:910px;top:358.00px;width:84px;height:19.00px"></div>
<div class="cell" style="left:26px;top:379.00px;width:26px;height:19.00px"></div>
<div class="cell" style="left:54px;top:379.00px;width:56px;height:19.00px"></div>
<div class="cell" style="left:112px;top:379.00px;width:24px;height:19.00px"></div>
<div class="cell" style="left:138px;top:379.00px;width:25px;height:19.00px"></div>
<div class="cell" style="left:165px;top:379.00px;width:23px;height:19.00px"></div>
<div class="cell" style="left:190px;top:379.00px;width:24px;height:19.00px"></div>
<div class="cell" style="left:216px;top:379.00px;width:42px;height:19.00px"></div>
<div class="cell" style="left:260px;top:379.00px;width:48px;height:19.00px"></div>
<div class="cell" style="left:310px;top:379.00px;width:33px;height:19.00px"></div>
<div class="cell" style="left:345px;top:379.00px;width:29px;height:19.00px"></div>
<div class="cell" style="left:376px;top:379.00px;width:43px;height:19.00px"></div>
<div class="cell" style="left:421px;top:379.00px;width:45px;height:19.00px;border-color:#a4a4a4"></div>
<div class="cell" style="left:468px;top:379.00px;width:43px;height:19.00px;border-color:#a4a4a4"></div>
<div class="cell" style="left:513px;top:379.00px;width:74px;height:19.00px"></div>
<div class="cell" style="left:589px;top:379.00px;width:26px;height:19.00px"></div>
<div class="cell" style="left:617px;top:379.00px;width:71px;height:19.00px"></div>
<div class="cell" style="left:690px;top:379.00px;width:72px;height:19.00px"></div>
<div class="cell" style="left:764px;top:379.00px;width:71px;height:19.00px"></div>
<div class="cell" style="left:837px;top:379.00px;width:71px;height:19.00px"></div>
<div class="cell" style="left:910px;top:379.00px;width:84px;height:19.00px"></div>
<div class="cell" style="left:26px;top:400.00px;width:26px;height:20.00px"></div>
<div class="cell" style="left:54px;top:400.00px;width:56px;height:20.00px"></div>
<div class="cell" style="left:112px;top:400.00px;width:24px;height:20.00px"></div>
<div class="cell" style="left:138px;top:400.00px;width:25px;height:20.00px"></div>
<div class="cell" style="left:165px;top:400.00px;width:23px;height:20.00px"></div>
<div class="cell" style="left:190px;top:400.00px;width:24px;height:20.00px"></div>
<div class="cell" style="left:216px;top:400.00px;width:42px;height:20.00px"></div>
<div class="cell" style="left:260px;top:400.00px;width:48px;height:20.00px"></div>
<div class="cell" style="left:310px;top:400.00px;width:33px;height:20.00px"></div>
<div class="cell" style="left:345px;top:400.00px;width:29px;height:20.00px"></div>
<div class="cell" style="left:376px;top:400.00px;width:43px;height:20.00px"></div>
<div class="cell" style="left:421px;top:400.00px;width:45px;height:20.00px;border-color:#a4a4a4"></div>
<div class="cell" style="left:468px;top:400.00px;width:43px;height:20.00px;border-color:#a4a4a4"></div>
<div class="cell" style="left:513px;top:400.00px;width:74px;height:20.00px"></div>
<div class="cell" style="left:589px;top:400.00px;width:26px;height:20.00px"></div>
<div class="cell" style="left:617px;top:400.00px;width:71px;height:20.00px"></div>
<div class="cell" style="left:690px;top:400.00px;width:72px;height:20.00px"></div>
<div class="cell" style="left:764px;top:400.00px;width:71px;height:20.00px"></div>
<div class="cell" style="left:837px;top:400.00px;width:71px;height:20.00px"></div>
<div class="cell" style="left:910px;top:400.00px;width:84px;height:20.00px"></div>
<div class="cell" style="left:26px;top:422.00px;width:26px;height:19.00px"></div>
<div class="cell" style="left:54px;top:422.00px;width:56px;height:19.00px"></div>
<div class="cell" style="left:112px;top:422.00px;width:24px;height:19.00px"></div>
<div class="cell" style="left:138px;top:422.00px;width:25px;height:19.00px"></div>
<div class="cell" style="left:165px;top:422.00px;width:23px;height:19.00px"></div>
<div class="cell" style="left:190px;top:422.00px;width:24px;height:19.00px"></div>
<div class="cell" style="left:216px;top:422.00px;width:42px;height:19.00px"></div>
<div class="cell" style="left:260px;top:422.00px;width:48px;height:19.00px"></div>
<div class="cell" style="left:310px;top:422.00px;width:33px;height:19.00px"></div>
<div class="cell" style="left:345px;top:422.00px;width:29px;height:19.00px"></div>
<div class="cell" style="left:376px;top:422.00px;width:43px;height:19.00px"></div>
<div class="cell" style="left:421px;top:422.00px;width:45px;height:19.00px;border-color:#a4a4a4"></div>
<div class="cell" style="left:468px;top:422.00px;width:43px;height:19.00px;border-color:#a4a4a4"></div>
<div class="cell" style="left:513px;top:422.00px;width:74px;height:19.00px"></div>
<div class="cell" style="left:589px;top:422.00px;width:26px;height:19.00px"></div>
<div class="cell" style="left:617px;top:422.00px;width:71px;height:19.00px"></div>
<div class="cell" style="left:690px;top:422.00px;width:72px;height:19.00px"></div>
<div class="cell" style="left:764px;top:422.00px;width:71px;height:19.00px"></div>
<div class="cell" style="left:837px;top:422.00px;width:71px;height:19.00px"></div>
<div class="cell" style="left:910px;top:422.00px;width:84px;height:19.00px"></div>
<div class="a" style="left:998px;top:146.00px;width:24px;height:19px;background:#ffffc8;border:1px solid #c0d0e4;border-right-color:#8ca4c8;border-bottom-color:#6c8cbc;border-radius:2px;font:bold 10.5px 'Liberation Sans';color:#10106a;text-align:center;line-height:17px">I</div>
<div class="a" style="left:1025px;top:146.00px;width:23px;height:19px;background:#ffffc8;border:1px solid #c0d0e4;border-right-color:#8ca4c8;border-bottom-color:#6c8cbc;border-radius:2px;font:bold 10.5px 'Liberation Sans';color:#10106a;text-align:center;line-height:17px">ID</div>
<div class="a" style="left:1051px;top:146.00px;width:29px;height:19px;background:#ffffc8;border:1px solid #c0d0e4;border-right-color:#8ca4c8;border-bottom-color:#6c8cbc;border-radius:2px;font:bold 10.5px 'Liberation Sans';color:#10106a;text-align:center;line-height:17px">PDF</div>
<div class="a" style="left:998px;top:168.00px;width:24px;height:18px;background:#fff;border:1px solid #d4dcea;border-right-color:#a8b8d4;border-bottom-color:#a0b4d0;border-radius:2px;font:10px 'Liberation Sans';color:#a8a8a8;text-align:center;line-height:17px">I</div>
<div class="a" style="left:1025px;top:168.00px;width:23px;height:18px;background:#fff;border:1px solid #d4dcea;border-right-color:#a8b8d4;border-bottom-color:#a0b4d0;border-radius:2px;font:10px 'Liberation Sans';color:#a8a8a8;text-align:center;line-height:17px">ID</div>
<div class="a" style="left:1051px;top:168.00px;width:29px;height:18px;background:#fff;border:1px solid #d4dcea;border-right-color:#a8b8d4;border-bottom-color:#a0b4d0;border-radius:2px;font:10px 'Liberation Sans';color:#a8a8a8;text-align:center;line-height:17px">PDF</div>
<div class="a" style="left:998px;top:189.00px;width:24px;height:18px;background:#fff;border:1px solid #d4dcea;border-right-color:#a8b8d4;border-bottom-color:#a0b4d0;border-radius:2px;font:10px 'Liberation Sans';color:#a8a8a8;text-align:center;line-height:17px">I</div>
<div class="a" style="left:1025px;top:189.00px;width:23px;height:18px;background:#fff;border:1px solid #d4dcea;border-right-color:#a8b8d4;border-bottom-color:#a0b4d0;border-radius:2px;font:10px 'Liberation Sans';color:#a8a8a8;text-align:center;line-height:17px">ID</div>
<div class="a" style="left:1051px;top:189.00px;width:29px;height:18px;background:#fff;border:1px solid #d4dcea;border-right-color:#a8b8d4;border-bottom-color:#a0b4d0;border-radius:2px;font:10px 'Liberation Sans';color:#a8a8a8;text-align:center;line-height:17px">PDF</div>
<div class="a" style="left:998px;top:210.00px;width:24px;height:19px;background:#fff;border:1px solid #d4dcea;border-right-color:#a8b8d4;border-bottom-color:#a0b4d0;border-radius:2px;font:10px 'Liberation Sans';color:#a8a8a8;text-align:center;line-height:17px">I</div>
<div class="a" style="left:1025px;top:210.00px;width:23px;height:19px;background:#fff;border:1px solid #d4dcea;border-right-color:#a8b8d4;border-bottom-color:#a0b4d0;border-radius:2px;font:10px 'Liberation Sans';color:#a8a8a8;text-align:center;line-height:17px">ID</div>
<div class="a" style="left:1051px;top:210.00px;width:29px;height:19px;background:#fff;border:1px solid #d4dcea;border-right-color:#a8b8d4;border-bottom-color:#a0b4d0;border-radius:2px;font:10px 'Liberation Sans';color:#a8a8a8;text-align:center;line-height:17px">PDF</div>
<div class="a" style="left:998px;top:232.00px;width:24px;height:18px;background:#fff;border:1px solid #d4dcea;border-right-color:#a8b8d4;border-bottom-color:#a0b4d0;border-radius:2px;font:10px 'Liberation Sans';color:#a8a8a8;text-align:center;line-height:17px">I</div>
<div class="a" style="left:1025px;top:232.00px;width:23px;height:18px;background:#fff;border:1px solid #d4dcea;border-right-color:#a8b8d4;border-bottom-color:#a0b4d0;border-radius:2px;font:10px 'Liberation Sans';color:#a8a8a8;text-align:center;line-height:17px">ID</div>
<div class="a" style="left:1051px;top:232.00px;width:29px;height:18px;background:#fff;border:1px solid #d4dcea;border-right-color:#a8b8d4;border-bottom-color:#a0b4d0;border-radius:2px;font:10px 'Liberation Sans';color:#a8a8a8;text-align:center;line-height:17px">PDF</div>
<div class="a" style="left:998px;top:253.00px;width:24px;height:18px;background:#fff;border:1px solid #d4dcea;border-right-color:#a8b8d4;border-bottom-color:#a0b4d0;border-radius:2px;font:10px 'Liberation Sans';color:#a8a8a8;text-align:center;line-height:17px">I</div>
<div class="a" style="left:1025px;top:253.00px;width:23px;height:18px;background:#fff;border:1px solid #d4dcea;border-right-color:#a8b8d4;border-bottom-color:#a0b4d0;border-radius:2px;font:10px 'Liberation Sans';color:#a8a8a8;text-align:center;line-height:17px">ID</div>
<div class="a" style="left:1051px;top:253.00px;width:29px;height:18px;background:#fff;border:1px solid #d4dcea;border-right-color:#a8b8d4;border-bottom-color:#a0b4d0;border-radius:2px;font:10px 'Liberation Sans';color:#a8a8a8;text-align:center;line-height:17px">PDF</div>
<div class="a" style="left:998px;top:274.00px;width:24px;height:19px;background:#fff;border:1px solid #d4dcea;border-right-color:#a8b8d4;border-bottom-color:#a0b4d0;border-radius:2px;font:10px 'Liberation Sans';color:#a8a8a8;text-align:center;line-height:17px">I</div>
<div class="a" style="left:1025px;top:274.00px;width:23px;height:19px;background:#fff;border:1px solid #d4dcea;border-right-color:#a8b8d4;border-bottom-color:#a0b4d0;border-radius:2px;font:10px 'Liberation Sans';color:#a8a8a8;text-align:center;line-height:17px">ID</div>
<div class="a" style="left:1051px;top:274.00px;width:29px;height:19px;background:#fff;border:1px solid #d4dcea;border-right-color:#a8b8d4;border-bottom-color:#a0b4d0;border-radius:2px;font:10px 'Liberation Sans';color:#a8a8a8;text-align:center;line-height:17px">PDF</div>
<div class="a" style="left:998px;top:296.00px;width:24px;height:18px;background:#fff;border:1px solid #d4dcea;border-right-color:#a8b8d4;border-bottom-color:#a0b4d0;border-radius:2px;font:10px 'Liberation Sans';color:#a8a8a8;text-align:center;line-height:17px">I</div>
<div class="a" style="left:1025px;top:296.00px;width:23px;height:18px;background:#fff;border:1px solid #d4dcea;border-right-color:#a8b8d4;border-bottom-color:#a0b4d0;border-radius:2px;font:10px 'Liberation Sans';color:#a8a8a8;text-align:center;line-height:17px">ID</div>
<div class="a" style="left:1051px;top:296.00px;width:29px;height:18px;background:#fff;border:1px solid #d4dcea;border-right-color:#a8b8d4;border-bottom-color:#a0b4d0;border-radius:2px;font:10px 'Liberation Sans';color:#a8a8a8;text-align:center;line-height:17px">PDF</div>
<div class="a" style="left:998px;top:317.00px;width:24px;height:18px;background:#fff;border:1px solid #d4dcea;border-right-color:#a8b8d4;border-bottom-color:#a0b4d0;border-radius:2px;font:10px 'Liberation Sans';color:#a8a8a8;text-align:center;line-height:17px">I</div>
<div class="a" style="left:1025px;top:317.00px;width:23px;height:18px;background:#fff;border:1px solid #d4dcea;border-right-color:#a8b8d4;border-bottom-color:#a0b4d0;border-radius:2px;font:10px 'Liberation Sans';color:#a8a8a8;text-align:center;line-height:17px">ID</div>
<div class="a" style="left:1051px;top:317.00px;width:29px;height:18px;background:#fff;border:1px solid #d4dcea;border-right-color:#a8b8d4;border-bottom-color:#a0b4d0;border-radius:2px;font:10px 'Liberation Sans';color:#a8a8a8;text-align:center;line-height:17px">PDF</div>
<div class="a" style="left:998px;top:338.00px;width:24px;height:18px;background:#fff;border:1px solid #d4dcea;border-right-color:#a8b8d4;border-bottom-color:#a0b4d0;border-radius:2px;font:10px 'Liberation Sans';color:#a8a8a8;text-align:center;line-height:17px">I</div>
<div class="a" style="left:1025px;top:338.00px;width:23px;height:18px;background:#fff;border:1px solid #d4dcea;border-right-color:#a8b8d4;border-bottom-color:#a0b4d0;border-radius:2px;font:10px 'Liberation Sans';color:#a8a8a8;text-align:center;line-height:17px">ID</div>
<div class="a" style="left:1051px;top:338.00px;width:29px;height:18px;background:#fff;border:1px solid #d4dcea;border-right-color:#a8b8d4;border-bottom-color:#a0b4d0;border-radius:2px;font:10px 'Liberation Sans';color:#a8a8a8;text-align:center;line-height:17px">PDF</div>
<div class="a" style="left:998px;top:359.00px;width:24px;height:18px;background:#fff;border:1px solid #d4dcea;border-right-color:#a8b8d4;border-bottom-color:#a0b4d0;border-radius:2px;font:10px 'Liberation Sans';color:#a8a8a8;text-align:center;line-height:17px">I</div>
<div class="a" style="left:1025px;top:359.00px;width:23px;height:18px;background:#fff;border:1px solid #d4dcea;border-right-color:#a8b8d4;border-bottom-color:#a0b4d0;border-radius:2px;font:10px 'Liberation Sans';color:#a8a8a8;text-align:center;line-height:17px">ID</div>
<div class="a" style="left:1051px;top:359.00px;width:29px;height:18px;background:#fff;border:1px solid #d4dcea;border-right-color:#a8b8d4;border-bottom-color:#a0b4d0;border-radius:2px;font:10px 'Liberation Sans';color:#a8a8a8;text-align:center;line-height:17px">PDF</div>
<div class="a" style="left:998px;top:380.00px;width:24px;height:18px;background:#fff;border:1px solid #d4dcea;border-right-color:#a8b8d4;border-bottom-color:#a0b4d0;border-radius:2px;font:10px 'Liberation Sans';color:#a8a8a8;text-align:center;line-height:17px">I</div>
<div class="a" style="left:1025px;top:380.00px;width:23px;height:18px;background:#fff;border:1px solid #d4dcea;border-right-color:#a8b8d4;border-bottom-color:#a0b4d0;border-radius:2px;font:10px 'Liberation Sans';color:#a8a8a8;text-align:center;line-height:17px">ID</div>
<div class="a" style="left:1051px;top:380.00px;width:29px;height:18px;background:#fff;border:1px solid #d4dcea;border-right-color:#a8b8d4;border-bottom-color:#a0b4d0;border-radius:2px;font:10px 'Liberation Sans';color:#a8a8a8;text-align:center;line-height:17px">PDF</div>
<div class="a" style="left:998px;top:401.00px;width:24px;height:19px;background:#fff;border:1px solid #d4dcea;border-right-color:#a8b8d4;border-bottom-color:#a0b4d0;border-radius:2px;font:10px 'Liberation Sans';color:#a8a8a8;text-align:center;line-height:17px">I</div>
<div class="a" style="left:1025px;top:401.00px;width:23px;height:19px;background:#fff;border:1px solid #d4dcea;border-right-color:#a8b8d4;border-bottom-color:#a0b4d0;border-radius:2px;font:10px 'Liberation Sans';color:#a8a8a8;text-align:center;line-height:17px">ID</div>
<div class="a" style="left:1051px;top:401.00px;width:29px;height:19px;background:#fff;border:1px solid #d4dcea;border-right-color:#a8b8d4;border-bottom-color:#a0b4d0;border-radius:2px;font:10px 'Liberation Sans';color:#a8a8a8;text-align:center;line-height:17px">PDF</div>
<div class="a" style="left:998px;top:423.00px;width:24px;height:18px;background:#fff;border:1px solid #d4dcea;border-right-color:#a8b8d4;border-bottom-color:#a0b4d0;border-radius:2px;font:10px 'Liberation Sans';color:#a8a8a8;text-align:center;line-height:17px">I</div>
<div class="a" style="left:1025px;top:423.00px;width:23px;height:18px;background:#fff;border:1px solid #d4dcea;border-right-color:#a8b8d4;border-bottom-color:#a0b4d0;border-radius:2px;font:10px 'Liberation Sans';color:#a8a8a8;text-align:center;line-height:17px">ID</div>
<div class="a" style="left:1051px;top:423.00px;width:29px;height:18px;background:#fff;border:1px solid #d4dcea;border-right-color:#a8b8d4;border-bottom-color:#a0b4d0;border-radius:2px;font:10px 'Liberation Sans';color:#a8a8a8;text-align:center;line-height:17px">PDF</div>
<div class="a" style="left:27px;top:147px;width:7px;height:16px;background:#ece0b0"></div>
<svg class="a" style="left:30px;top:152.5px" width="5" height="5" viewBox="0 0 5 5"><path d="M2.5 0.2v4.6M0.4 1.3l4.2 2.4M0.4 3.7l4.2-2.4" stroke="#101010" stroke-width="0.95" fill="none"/></svg>
<svg class="a" style="left:58.0px;top:153.2px" width="5" height="5" viewBox="0 0 5 5"><path d="M2.5 0.2v4.6M0.4 1.3l4.2 2.4M0.4 3.7l4.2-2.4" stroke="#101010" stroke-width="0.95" fill="none"/></svg>
<svg class="a" style="left:64.6px;top:153.2px" width="5" height="5" viewBox="0 0 5 5"><path d="M2.5 0.2v4.6M0.4 1.3l4.2 2.4M0.4 3.7l4.2-2.4" stroke="#101010" stroke-width="0.95" fill="none"/></svg>
<svg class="a" style="left:71.2px;top:153.2px" width="5" height="5" viewBox="0 0 5 5"><path d="M2.5 0.2v4.6M0.4 1.3l4.2 2.4M0.4 3.7l4.2-2.4" stroke="#101010" stroke-width="0.95" fill="none"/></svg>
<svg class="a" style="left:77.8px;top:153.2px" width="5" height="5" viewBox="0 0 5 5"><path d="M2.5 0.2v4.6M0.4 1.3l4.2 2.4M0.4 3.7l4.2-2.4" stroke="#101010" stroke-width="0.95" fill="none"/></svg>
<svg class="a" style="left:84.4px;top:153.2px" width="5" height="5" viewBox="0 0 5 5"><path d="M2.5 0.2v4.6M0.4 1.3l4.2 2.4M0.4 3.7l4.2-2.4" stroke="#101010" stroke-width="0.95" fill="none"/></svg>
<svg class="a" style="left:91.0px;top:153.2px" width="5" height="5" viewBox="0 0 5 5"><path d="M2.5 0.2v4.6M0.4 1.3l4.2 2.4M0.4 3.7l4.2-2.4" stroke="#101010" stroke-width="0.95" fill="none"/></svg>
<svg class="a" style="left:117.0px;top:153.2px" width="5" height="5" viewBox="0 0 5 5"><path d="M2.5 0.2v4.6M0.4 1.3l4.2 2.4M0.4 3.7l4.2-2.4" stroke="#101010" stroke-width="0.95" fill="none"/></svg>
<svg class="a" style="left:123.6px;top:153.2px" width="5" height="5" viewBox="0 0 5 5"><path d="M2.5 0.2v4.6M0.4 1.3l4.2 2.4M0.4 3.7l4.2-2.4" stroke="#101010" stroke-width="0.95" fill="none"/></svg>
<svg class="a" style="left:143.7px;top:155.3px" width="4.6" height="4.6" viewBox="0 0 5 5"><path d="M2.5 0.2v4.6M0.4 1.3l4.2 2.4M0.4 3.7l4.2-2.4" stroke="#101010" stroke-width="0.95" fill="none"/></svg>
<svg class="a" style="left:264.0px;top:153.6px" width="5" height="5" viewBox="0 0 5 5"><path d="M2.5 0.2v4.6M0.4 1.3l4.2 2.4M0.4 3.7l4.2-2.4" stroke="#101010" stroke-width="0.95" fill="none"/></svg>
<svg class="a" style="left:270.6px;top:153.6px" width="5" height="5" viewBox="0 0 5 5"><path d="M2.5 0.2v4.6M0.4 1.3l4.2 2.4M0.4 3.7l4.2-2.4" stroke="#101010" stroke-width="0.95" fill="none"/></svg>
<div class="a" style="left:451px;top:146.00px;width:14px;height:18.00px;background:#e4e8f0"></div>
<svg class="a" style="left:455px;top:153.00px" width="8" height="4" viewBox="0 0 8 4"><path d="M0 0h8L4 4z" fill="#5c6078"/></svg>
<div class="a" style="left:497px;top:146.00px;width:13px;height:18.00px;background:#e4e8f0"></div>
<svg class="a" style="left:501px;top:153.00px" width="8" height="4" viewBox="0 0 8 4"><path d="M0 0h8L4 4z" fill="#5c6078"/></svg>
<div class="a" style="left:451px;top:168.00px;width:14px;height:17.00px;background:#e4e8f0"></div>
<svg class="a" style="left:455px;top:175.00px" width="8" height="4" viewBox="0 0 8 4"><path d="M0 0h8L4 4z" fill="#b4b4b4"/></svg>
<div class="a" style="left:497px;top:168.00px;width:13px;height:17.00px;background:#e4e8f0"></div>
<svg class="a" style="left:501px;top:175.00px" width="8" height="4" viewBox="0 0 8 4"><path d="M0 0h8L4 4z" fill="#b4b4b4"/></svg>
<div class="a" style="left:451px;top:189.00px;width:14px;height:17.00px;background:#e4e8f0"></div>
<svg class="a" style="left:455px;top:196.00px" width="8" height="4" viewBox="0 0 8 4"><path d="M0 0h8L4 4z" fill="#b4b4b4"/></svg>
<div class="a" style="left:497px;top:189.00px;width:13px;height:17.00px;background:#e4e8f0"></div>
<svg class="a" style="left:501px;top:196.00px" width="8" height="4" viewBox="0 0 8 4"><path d="M0 0h8L4 4z" fill="#b4b4b4"/></svg>
<div class="a" style="left:451px;top:210.00px;width:14px;height:18.00px;background:#e4e8f0"></div>
<svg class="a" style="left:455px;top:217.00px" width="8" height="4" viewBox="0 0 8 4"><path d="M0 0h8L4 4z" fill="#b4b4b4"/></svg>
<div class="a" style="left:497px;top:210.00px;width:13px;height:18.00px;background:#e4e8f0"></div>
<svg class="a" style="left:501px;top:217.00px" width="8" height="4" viewBox="0 0 8 4"><path d="M0 0h8L4 4z" fill="#b4b4b4"/></svg>
<div class="a" style="left:451px;top:232.00px;width:14px;height:17.00px;background:#e4e8f0"></div>
<svg class="a" style="left:455px;top:239.00px" width="8" height="4" viewBox="0 0 8 4"><path d="M0 0h8L4 4z" fill="#b4b4b4"/></svg>
<div class="a" style="left:497px;top:232.00px;width:13px;height:17.00px;background:#e4e8f0"></div>
<svg class="a" style="left:501px;top:239.00px" width="8" height="4" viewBox="0 0 8 4"><path d="M0 0h8L4 4z" fill="#b4b4b4"/></svg>
<div class="a" style="left:451px;top:253.00px;width:14px;height:17.00px;background:#e4e8f0"></div>
<svg class="a" style="left:455px;top:260.00px" width="8" height="4" viewBox="0 0 8 4"><path d="M0 0h8L4 4z" fill="#b4b4b4"/></svg>
<div class="a" style="left:497px;top:253.00px;width:13px;height:17.00px;background:#e4e8f0"></div>
<svg class="a" style="left:501px;top:260.00px" width="8" height="4" viewBox="0 0 8 4"><path d="M0 0h8L4 4z" fill="#b4b4b4"/></svg>
<div class="a" style="left:451px;top:274.00px;width:14px;height:18.00px;background:#e4e8f0"></div>
<svg class="a" style="left:455px;top:281.00px" width="8" height="4" viewBox="0 0 8 4"><path d="M0 0h8L4 4z" fill="#b4b4b4"/></svg>
<div class="a" style="left:497px;top:274.00px;width:13px;height:18.00px;background:#e4e8f0"></div>
<svg class="a" style="left:501px;top:281.00px" width="8" height="4" viewBox="0 0 8 4"><path d="M0 0h8L4 4z" fill="#b4b4b4"/></svg>
<div class="a" style="left:451px;top:296.00px;width:14px;height:17.00px;background:#e4e8f0"></div>
<svg class="a" style="left:455px;top:303.00px" width="8" height="4" viewBox="0 0 8 4"><path d="M0 0h8L4 4z" fill="#b4b4b4"/></svg>
<div class="a" style="left:497px;top:296.00px;width:13px;height:17.00px;background:#e4e8f0"></div>
<svg class="a" style="left:501px;top:303.00px" width="8" height="4" viewBox="0 0 8 4"><path d="M0 0h8L4 4z" fill="#b4b4b4"/></svg>
<div class="a" style="left:451px;top:317.00px;width:14px;height:17.00px;background:#e4e8f0"></div>
<svg class="a" style="left:455px;top:324.00px" width="8" height="4" viewBox="0 0 8 4"><path d="M0 0h8L4 4z" fill="#b4b4b4"/></svg>
<div class="a" style="left:497px;top:317.00px;width:13px;height:17.00px;background:#e4e8f0"></div>
<svg class="a" style="left:501px;top:324.00px" width="8" height="4" viewBox="0 0 8 4"><path d="M0 0h8L4 4z" fill="#b4b4b4"/></svg>
<div class="a" style="left:451px;top:338.00px;width:14px;height:17.00px;background:#e4e8f0"></div>
<svg class="a" style="left:455px;top:345.00px" width="8" height="4" viewBox="0 0 8 4"><path d="M0 0h8L4 4z" fill="#b4b4b4"/></svg>
<div class="a" style="left:497px;top:338.00px;width:13px;height:17.00px;background:#e4e8f0"></div>
<svg class="a" style="left:501px;top:345.00px" width="8" height="4" viewBox="0 0 8 4"><path d="M0 0h8L4 4z" fill="#b4b4b4"/></svg>
<div class="a" style="left:451px;top:359.00px;width:14px;height:17.00px;background:#e4e8f0"></div>
<svg class="a" style="left:455px;top:366.00px" width="8" height="4" viewBox="0 0 8 4"><path d="M0 0h8L4 4z" fill="#b4b4b4"/></svg>
<div class="a" style="left:497px;top:359.00px;width:13px;height:17.00px;background:#e4e8f0"></div>
<svg class="a" style="left:501px;top:366.00px" width="8" height="4" viewBox="0 0 8 4"><path d="M0 0h8L4 4z" fill="#b4b4b4"/></svg>
<div class="a" style="left:451px;top:380.00px;width:14px;height:17.00px;background:#e4e8f0"></div>
<svg class="a" style="left:455px;top:387.00px" width="8" height="4" viewBox="0 0 8 4"><path d="M0 0h8L4 4z" fill="#b4b4b4"/></svg>
<div class="a" style="left:497px;top:380.00px;width:13px;height:17.00px;background:#e4e8f0"></div>
<svg class="a" style="left:501px;top:387.00px" width="8" height="4" viewBox="0 0 8 4"><path d="M0 0h8L4 4z" fill="#b4b4b4"/></svg>
<div class="a" style="left:451px;top:401.00px;width:14px;height:18.00px;background:#e4e8f0"></div>
<svg class="a" style="left:455px;top:408.00px" width="8" height="4" viewBox="0 0 8 4"><path d="M0 0h8L4 4z" fill="#b4b4b4"/></svg>
<div class="a" style="left:497px;top:401.00px;width:13px;height:18.00px;background:#e4e8f0"></div>
<svg class="a" style="left:501px;top:408.00px" width="8" height="4" viewBox="0 0 8 4"><path d="M0 0h8L4 4z" fill="#b4b4b4"/></svg>
<div class="a" style="left:451px;top:423.00px;width:14px;height:17.00px;background:#e4e8f0"></div>
<svg class="a" style="left:455px;top:430.00px" width="8" height="4" viewBox="0 0 8 4"><path d="M0 0h8L4 4z" fill="#b4b4b4"/></svg>
<div class="a" style="left:497px;top:423.00px;width:13px;height:17.00px;background:#e4e8f0"></div>
<svg class="a" style="left:501px;top:430.00px" width="8" height="4" viewBox="0 0 8 4"><path d="M0 0h8L4 4z" fill="#b4b4b4"/></svg>
<div class="t" style="left:424.57px;top:151px;font-family:'Liberation Sans';font-size:10.29px;font-weight:bold;font-style:normal;color:#0a0a70;transform:scaleX(1.1263);transform-origin:0 0;">1-I...</div>
<div class="t" style="left:471.56px;top:151px;font-family:'Liberation Sans';font-size:10.29px;font-weight:bold;font-style:normal;color:#0a0a70;transform:scaleX(1.1375);transform-origin:0 0;">1-...</div>
<div class="a" style="left:13px;top:144px;width:11px;height:299px;background:#e6ebf4;border-left:1px solid #fff;border-radius:5px 5px 5px 5px"></div>
<div class="a" style="left:13px;top:144px;width:11px;height:15px;background:#f0f3f9;border-radius:5px 5px 0 0;border-bottom:1px solid #5c6484"></div>
<svg class="a" style="left:16px;top:149px" width="7" height="5" viewBox="0 0 7 5"><path d="M0 4.5h7L3.5 0.5z" fill="#646884"/></svg>
<div class="a" style="left:13px;top:427px;width:11px;height:16px;background:#f0f3f9;border-radius:0 0 5px 5px;border-top:1px solid #6a7290"></div>
<svg class="a" style="left:16px;top:433px" width="7" height="5" viewBox="0 0 7 5"><path d="M0 0.5h7L3.5 4.5z" fill="#646884"/></svg>
<svg class="a" style="left:20px;top:253px" width="3" height="3" viewBox="0 0 3 3"><path d="M0.5 2.5L2.5 0.5" stroke="#6a88bc" stroke-width="1"/></svg>
<svg class="a" style="left:20px;top:261px" width="3" height="3" viewBox="0 0 3 3"><path d="M0.5 2.5L2.5 0.5" stroke="#6a88bc" stroke-width="1"/></svg>
<svg class="a" style="left:20px;top:269px" width="3" height="3" viewBox="0 0 3 3"><path d="M0.5 2.5L2.5 0.5" stroke="#6a88bc" stroke-width="1"/></svg>
<svg class="a" style="left:20px;top:277px" width="3" height="3" viewBox="0 0 3 3"><path d="M0.5 2.5L2.5 0.5" stroke="#6a88bc" stroke-width="1"/></svg>
<svg class="a" style="left:20px;top:285px" width="3" height="3" viewBox="0 0 3 3"><path d="M0.5 2.5L2.5 0.5" stroke="#6a88bc" stroke-width="1"/></svg>
<svg class="a" style="left:20px;top:293px" width="3" height="3" viewBox="0 0 3 3"><path d="M0.5 2.5L2.5 0.5" stroke="#6a88bc" stroke-width="1"/></svg>
<svg class="a" style="left:20px;top:301px" width="3" height="3" viewBox="0 0 3 3"><path d="M0.5 2.5L2.5 0.5" stroke="#6a88bc" stroke-width="1"/></svg>
<svg class="a" style="left:20px;top:309px" width="3" height="3" viewBox="0 0 3 3"><path d="M0.5 2.5L2.5 0.5" stroke="#6a88bc" stroke-width="1"/></svg>
<svg class="a" style="left:20px;top:317px" width="3" height="3" viewBox="0 0 3 3"><path d="M0.5 2.5L2.5 0.5" stroke="#6a88bc" stroke-width="1"/></svg>
<svg class="a" style="left:16px;top:257px" width="3" height="3" viewBox="0 0 3 3"><path d="M0.5 2.5L2.5 0.5" stroke="#6a88bc" stroke-width="1"/></svg>
<svg class="a" style="left:16px;top:265px" width="3" height="3" viewBox="0 0 3 3"><path d="M0.5 2.5L2.5 0.5" stroke="#6a88bc" stroke-width="1"/></svg>
<svg class="a" style="left:16px;top:273px" width="3" height="3" viewBox="0 0 3 3"><path d="M0.5 2.5L2.5 0.5" stroke="#6a88bc" stroke-width="1"/></svg>
<svg class="a" style="left:16px;top:281px" width="3" height="3" viewBox="0 0 3 3"><path d="M0.5 2.5L2.5 0.5" stroke="#6a88bc" stroke-width="1"/></svg>
<svg class="a" style="left:16px;top:289px" width="3" height="3" viewBox="0 0 3 3"><path d="M0.5 2.5L2.5 0.5" stroke="#6a88bc" stroke-width="1"/></svg>
<svg class="a" style="left:16px;top:297px" width="3" height="3" viewBox="0 0 3 3"><path d="M0.5 2.5L2.5 0.5" stroke="#6a88bc" stroke-width="1"/></svg>
<svg class="a" style="left:16px;top:305px" width="3" height="3" viewBox="0 0 3 3"><path d="M0.5 2.5L2.5 0.5" stroke="#6a88bc" stroke-width="1"/></svg>
<svg class="a" style="left:16px;top:313px" width="3" height="3" viewBox="0 0 3 3"><path d="M0.5 2.5L2.5 0.5" stroke="#6a88bc" stroke-width="1"/></svg>
<div class="fld" style="left:53px;top:452px;width:59px;height:19px"></div>
<div class="fld" style="left:186px;top:452px;width:37px;height:19px"></div>
<div class="fld" style="left:232px;top:452px;width:39px;height:19px"></div>
<div class="fld" style="left:331px;top:452px;width:43px;height:19px"></div>
<div class="fld" style="left:408px;top:452px;width:632px;height:19px"></div>
<div class="fld" style="left:53px;top:475px;width:293px;height:19px"></div>
<div class="fld" style="left:392px;top:475px;width:104px;height:19px"></div>
<div class="fld" style="left:498px;top:475px;width:94px;height:19px"></div>
<div class="fld" style="left:593px;top:475px;width:134px;height:19px"></div>
<div class="fld" style="left:801px;top:475px;width:70px;height:19px"></div>
<div class="fld" style="left:938px;top:475px;width:24px;height:19px"></div>
<div class="fld" style="left:1055px;top:475px;width:25px;height:19px"></div>
<div class="fld" style="left:53px;top:499px;width:490px;height:18px"></div>
<div class="fld" style="left:609px;top:499px;width:67px;height:18px"></div>
<div class="fld" style="left:723px;top:499px;width:60px;height:18px"></div>
<div class="fld" style="left:868px;top:499px;width:86px;height:18px"></div>
<div class="fld" style="left:1018px;top:499px;width:62px;height:18px"></div>
<div class="t" style="left:11.37px;top:457px;font-family:'Liberation Sans';font-size:11.3px;font-weight:normal;font-style:normal;color:#000;transform:scaleX(0.9262);transform-origin:0 0;-webkit-text-stroke:0.15px currentColor;">Emissao</div>
<div class="t" style="left:125.48px;top:457px;font-family:'Liberation Sans';font-size:11.3px;font-weight:normal;font-style:normal;color:#000;transform:scaleX(0.9177);transform-origin:0 0;-webkit-text-stroke:0.15px currentColor;">Filial Origem</div>
<div class="t" style="left:289.34px;top:457px;font-family:'Liberation Sans';font-size:11.3px;font-weight:normal;font-style:normal;color:#000;transform:scaleX(0.9590);transform-origin:0 0;-webkit-text-stroke:0.15px currentColor;">Especie</div>
<div class="t" style="left:387.20px;top:457px;font-family:'Liberation Sans';font-size:11.3px;font-weight:normal;font-style:normal;color:#000;transform:scaleX(0.9600);transform-origin:0 0;-webkit-text-stroke:0.15px currentColor;">Obs</div>
<div class="t" style="left:7.29px;top:480px;font-family:'Liberation Sans';font-size:11.74px;font-weight:normal;font-style:normal;color:#000;transform:scaleX(0.9149);transform-origin:0 0;-webkit-text-stroke:0.15px currentColor;">Natureza</div>
<div class="t" style="left:350.26px;top:480px;font-family:'Liberation Sans';font-size:11.74px;font-weight:normal;font-style:normal;color:#000;transform:scaleX(0.9429);transform-origin:0 0;-webkit-text-stroke:0.15px currentColor;">Inclusao</div>
<div class="t" style="left:736.37px;top:480px;font-family:'Liberation Sans';font-size:11.74px;font-weight:normal;font-style:normal;color:#000;transform:scaleX(0.9328);transform-origin:0 0;-webkit-text-stroke:0.15px currentColor;">Seq nf saida</div>
<div class="t" style="left:882.30px;top:480px;font-family:'Liberation Sans';font-size:11.74px;font-weight:normal;font-style:normal;color:#000;transform:scaleX(0.8982);transform-origin:0 0;-webkit-text-stroke:0.15px currentColor;">UF Pessoa</div>
<div class="t" style="left:979.16px;top:480px;font-family:'Liberation Sans';font-size:11.74px;font-weight:normal;font-style:normal;color:#000;transform:scaleX(0.9417);transform-origin:0 0;-webkit-text-stroke:0.15px currentColor;">UF Transacao</div>
<div class="t" style="left:15.28px;top:504px;font-family:'Liberation Sans';font-size:11.74px;font-weight:normal;font-style:normal;color:#000;transform:scaleX(0.9211);transform-origin:0 0;-webkit-text-stroke:0.15px currentColor;">Pessoa</div>
<div class="t" style="left:549.30px;top:504px;font-family:'Liberation Sans';font-size:11.74px;font-weight:normal;font-style:normal;color:#000;transform:scaleX(0.9274);transform-origin:0 0;-webkit-text-stroke:0.15px currentColor;">Vlr Base ST</div>
<div class="t" style="left:691.30px;top:504px;font-family:'Liberation Sans';font-size:11.74px;font-weight:normal;font-style:normal;color:#000;transform:scaleX(0.9156);transform-origin:0 0;-webkit-text-stroke:0.15px currentColor;">Vlr ST</div>
<div class="t" style="left:794.50px;top:504px;font-family:'Liberation Sans';font-size:11.74px;font-weight:normal;font-style:normal;color:#000;transform:scaleX(0.8914);transform-origin:0 0;-webkit-text-stroke:0.15px currentColor;">Vlr Base GNRE</div>
<div class="t" style="left:972.10px;top:504px;font-family:'Liberation Sans';font-size:11.74px;font-weight:normal;font-style:normal;color:#000;transform:scaleX(0.8706);transform-origin:0 0;-webkit-text-stroke:0.15px currentColor;">Vlr GNRE</div>
<div class="a" style="left:1044px;top:452px;width:35px;height:19px;background:#c4c4c4;border:1px solid #a4a4a4;border-right-color:#7090c0;border-bottom-color:#6c8cbc;border-radius:2px;box-shadow:inset 1px 1px 0 #d4d4d4"></div>
<div class="t" style="left:1048.00px;top:457px;font-family:'Liberation Sans';font-size:10.87px;font-weight:normal;font-style:normal;color:#000;transform:scaleX(1.0000);transform-origin:0 0;-webkit-text-stroke:0.15px currentColor;">Det.&gt;</div>
<div class="a" style="left:42px;top:519px;width:271px;height:15px;background:#ffff00"></div>
<div class="t" style="left:42.70px;top:522px;font-family:'Liberation Sans';font-size:10.87px;font-weight:normal;font-style:italic;color:#d00000;transform:scaleX(1.0189);transform-origin:0 0;-webkit-text-stroke:0.1px currentColor;">Dê Duplo Clique na Linha para Conusltar a Nota Fiscal</div>
<div class="tab" style="left:136.4px;width:130.7px"></div>
<div class="t" style="left:164.32px;top:553px;font-family:'Liberation Sans';font-size:11.09px;font-weight:normal;font-style:normal;color:#1c1c28;transform:scaleX(0.9763);transform-origin:0 0;-webkit-text-stroke:0.15px currentColor;">Processamento</div>
<div class="tab" style="left:270.2px;width:129.3px"></div>
<div class="t" style="left:276.40px;top:553px;font-family:'Liberation Sans';font-size:11.09px;font-weight:normal;font-style:normal;color:#1c1c28;transform:scaleX(0.9958);transform-origin:0 0;-webkit-text-stroke:0.15px currentColor;">Hist. Alteracao/Exclusao</div>
<div class="tab" style="left:402.9px;width:129.6px"></div>
<div class="t" style="left:447.45px;top:553px;font-family:'Liberation Sans';font-size:11.09px;font-weight:normal;font-style:normal;color:#1c1c28;transform:scaleX(0.9488);transform-origin:0 0;-webkit-text-stroke:0.15px currentColor;">Consulta</div>
<div class="tab" style="left:535.9px;width:129.8px"></div>
<div class="t" style="left:571.24px;top:553px;font-family:'Liberation Sans';font-size:11.09px;font-weight:normal;font-style:normal;color:#1c1c28;transform:scaleX(0.9645);transform-origin:0 0;-webkit-text-stroke:0.15px currentColor;">Unificar Filial</div>
<div class="tab" style="left:668.9px;width:129.6px"></div>
<div class="t" style="left:683.46px;top:553px;font-family:'Liberation Sans';font-size:11.09px;font-weight:normal;font-style:normal;color:#1c1c28;transform:scaleX(0.9425);transform-origin:0 0;-webkit-text-stroke:0.15px currentColor;">Unificar Filial Em Lote</div>
<div class="tab" style="left:801.9px;width:129.9px"></div>
<div class="t" style="left:831.12px;top:553px;font-family:'Liberation Sans';font-size:11.09px;font-weight:normal;font-style:normal;color:#1c1c28;transform:scaleX(0.9806);transform-origin:0 0;-webkit-text-stroke:0.15px currentColor;">Consulta Erros</div>
<div class="a" style="left:1px;top:547px;width:131px;height:22px;background:#94b4d8;border-radius:0 0 0 4px"></div>
<div class="a" style="left:11px;top:545px;width:120px;height:24px;border:3px solid #f40808"></div>
<div class="t" style="left:33.44px;top:553px;font-family:'Liberation Sans';font-size:11.09px;font-weight:normal;font-style:normal;color:#14142a;transform:scaleX(0.9577);transform-origin:0 0;-webkit-text-stroke:0.15px currentColor;">Movimentacao</div>
</body></html>
